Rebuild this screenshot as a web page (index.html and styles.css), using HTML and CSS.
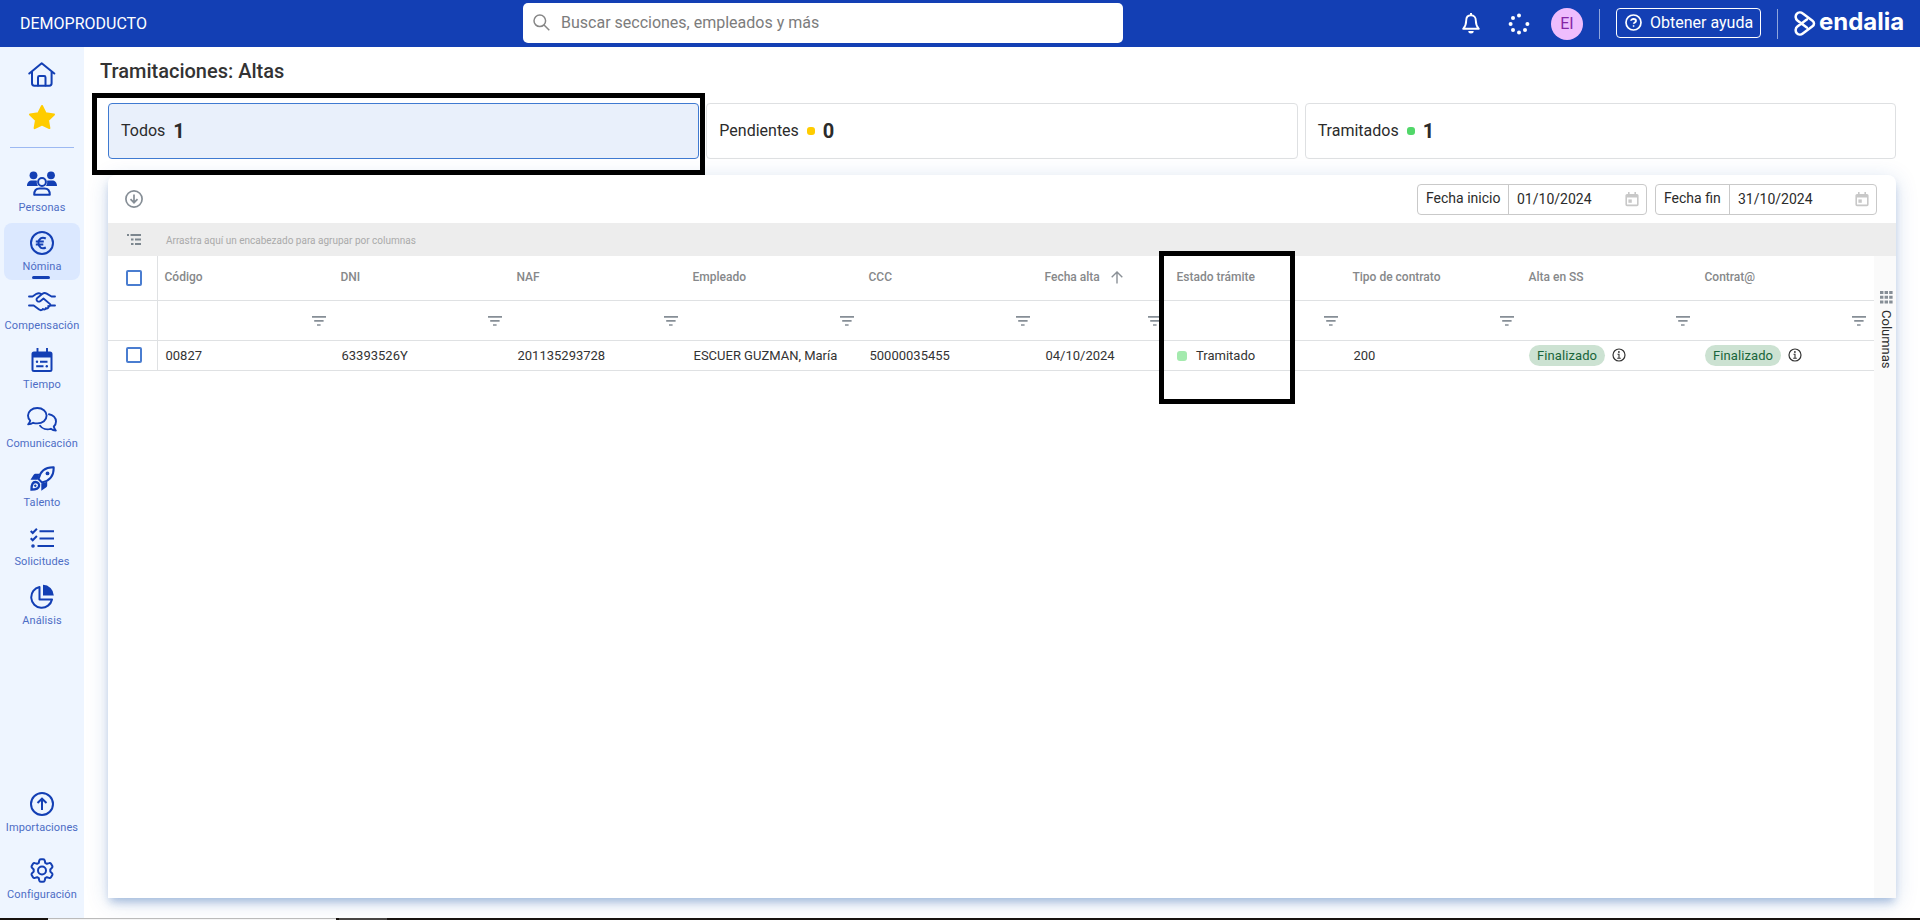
FILE: index.html
```html
<!DOCTYPE html>
<html lang="es">
<head>
    <meta charset="UTF-8">
    <meta name="viewport" content="width=device-width, initial-scale=1.0">
    <title>Tramitaciones: Altas</title>
    <link rel="stylesheet" href="styles.css">
</head>
<body>
    <!-- Shared icons -->
    <svg class="sprite">
        <symbol id="filter" viewBox="0 0 14 10"><path d="M0 .8h14M2.2 4.9h9.4M5 9h3.6" stroke="#868e96" stroke-width="1.7"/></symbol>
        <symbol id="info" viewBox="0 0 14 14"><circle cx="7" cy="7" r="6" fill="none" stroke="#333" stroke-width="1.2"/><path d="M5.5 6.2H7v4M5.2 10.2h3.6" fill="none" stroke="#333" stroke-width="1.1"/><circle cx="6.9" cy="4" r=".9" fill="#333"/></symbol>
        <symbol id="calendar" viewBox="0 0 14 15"><path d="M2 2h10a1.6 1.6 0 0 1 1.6 1.6v9A1.6 1.6 0 0 1 12 14.2H2a1.6 1.6 0 0 1-1.6-1.6v-9A1.6 1.6 0 0 1 2 2zM2 5.4v7.2h10V5.4z" fill="#c8c8c8" fill-rule="evenodd"/><path d="M3.8 0v3M10.2 0v3" stroke="#c8c8c8" stroke-width="1.6"/><path d="M3.4 7.4h3.4v3.4H3.4z" fill="#c8c8c8"/></symbol>
    </svg>

    <header class="topbar">
        <div class="company">DEMOPRODUCTO</div>
        <div class="search">
            <svg width="17" height="17" viewBox="0 0 17 17" fill="none" stroke="#868686" stroke-width="1.5"><circle cx="6.8" cy="6.8" r="5.8"/><path d="M11 11l5.3 5.3"/></svg>
            <span>Buscar secciones, empleados y más</span>
        </div>
        <div class="actions">
            <svg class="bell" width="18" height="21" viewBox="0 0 18 21"><path d="M9 2.2c-3.2 0-4.8 2.4-4.8 5.2 0 3.8-1 6.2-3 8.4h15.6c-2-2.2-3-4.6-3-8.4C13.8 4.6 12.2 2.2 9 2.2z" fill="none" stroke="#fff" stroke-width="1.9" stroke-linejoin="round"/><path d="M9 0v2.5" stroke="#fff" stroke-width="2"/><path d="M6.3 18h5.4a2.7 2.5 0 0 1-5.4 0z" fill="#fff"/></svg>
            <svg class="spinner" width="22" height="22" viewBox="0 0 22 22" fill="#fff"><circle cx="11" cy="2.6" r="2"/><circle cx="5" cy="5" r="2"/><circle cx="2.6" cy="11" r="2"/><circle cx="5" cy="17" r="2"/><circle cx="11" cy="19.4" r="2"/><circle cx="17" cy="17" r="2"/><circle cx="19.4" cy="11" r="2"/></svg>
            <div class="avatar">EI</div>
            <div class="divider"></div>
            <div class="help">
                <svg width="17" height="17" viewBox="0 0 17 17" fill="none" stroke="#fff"><circle cx="8.5" cy="8.5" r="7.5" stroke-width="1.7"/><path d="M6 6.8C6 4.4 11 4.4 11 6.9c0 1.5-2.3 1.5-2.3 2.9" stroke-width="1.8"/><circle cx="8.6" cy="12" r=".6"/></svg>
                <span>Obtener ayuda</span>
            </div>
            <div class="divider"></div>
            <div class="logo">
                <svg width="22" height="25" viewBox="0 0 22 25" fill="none" stroke="#fff" stroke-width="2.5" stroke-linecap="round" stroke-linejoin="round"><path d="M12.8 8.6L3.4 15.6c-2.2 1.7-2.2 4.8-.7 6.5 1.6 1.8 4.2 2 6.1.5l9.7-7.3c2-1.5 2-4.1 0-5.6L8.8 2.4C6.900.9 4.300 1.100 2.700 2.900 1.200 4.600 1.200 7.700 3.400 9.400l9.400 7"/></svg>
                <span>endalia</span>
            </div>
        </div>
    </header>

    <div class="layout">
        <aside class="sidebar">
            <div class="item home">
                <svg width="28" height="25" viewBox="0 0 28 25" fill="none" stroke="#133fb4" stroke-width="2" stroke-linecap="round" stroke-linejoin="round"><path d="M1.300 11.500L13.700 1.200l12.600 10.300M4 9.500v11.800c0 1.500.8 2.400 2.300 2.400h15c1.500 0 2.300-.9 2.300-2.400V9.500"/><path d="M10 23.500v-8c0-.9.4-1.400 1.300-1.400h4.900c.9 0 1.300.5 1.300 1.400v8"/></svg>
            </div>
            <div class="item star">
                <svg width="28" height="26" viewBox="0 0 28 26"><path d="M14 2l3.600 7.300 8.400 1.200-6 5.800 1.400 7.800L14 20.500l-7.400 3.600L8 16.300l-6-5.800 8.400-1.200z" fill="#ffcc00" stroke="#ffcc00" stroke-width="2" stroke-linejoin="round"/></svg>
            </div>
            <div class="separator"></div>
            <div class="item">
                <svg width="30" height="25" viewBox="0 0 30 25" fill="#133fb4"><circle cx="6.5" cy="4.3" r="3.9"/><circle cx="24" cy="4.3" r="3.9"/><path d="M0 15c0-3.600 2-5.600 5-5.600h3c.8 0 1.400.2 2 .4-.5 2-.1 3.800 1 5.200zM30 15c0-3.600-2-5.600-5-5.600h-3c-.8 0-1.400.2-2 .4.500 2 .1 3.800-1 5.200z"/><circle cx="15" cy="11" r="3.9" fill="none" stroke="#133fb4" stroke-width="2"/><path d="M7.200 23.800c0-4 2.200-6.200 5.400-6.200h4.800c3.200 0 5.400 2.200 5.400 6.200z" fill="none" stroke="#133fb4" stroke-width="2" stroke-linejoin="round"/></svg>
                <span>Personas</span>
            </div>
            <div class="item active">
                <svg width="24" height="24" viewBox="0 0 24 24" fill="none" stroke="#133fb4" stroke-width="2"><circle cx="12" cy="12" r="11"/><path d="M15.800 7.500c-4-2-7.300.2-7.300 4.500s3.300 6.500 7.300 4.500M5.800 10.500h8M5.800 13.500h7.500"/></svg>
                <span>Nómina</span>
            </div>
            <div class="item short">
                <svg width="28" height="20" viewBox="0 0 28 20" fill="none" stroke="#133fb4" stroke-width="1.9" stroke-linecap="round" stroke-linejoin="round"><path d="M1 4.500h3.500l4-2.700c1.500-.8 3-.8 4.300 0M27 4.500h-3.500l-4.800-2.900c-1.500-.8-3-.7-4.200.2L9.300 6.100c-1.200 1-.9 2.700.4 3.300 1 .4 2 .1 2.800-.5l3-2.400 6.300 5.400c1.300 1.200-.1 3.100-1.600 2.100.9 1.500-.8 3.100-2.300 2-.2 1.500-1.800 1.900-3 .9-.7 1.400-2.300 1.800-3.800.7L5.700 13.500H1M27 13.500h-4.600"/></svg>
                <span>Compensación</span>
            </div>
            <div class="item">
                <svg width="22" height="25" viewBox="0 0 22 25" fill="#133fb4"><path d="M3 3.500h16a2.500 2.500 0 0 1 2.500 2.500v15.500A2.500 2.500 0 0 1 19 24H3a2.500 2.500 0 0 1-2.500-2.500V6A2.500 2.500 0 0 1 3 3.500zM2.500 9.500v12.500h17V9.500z" fill-rule="evenodd"/><path d="M6.500 0v5M16 0v5M9 13.700h7.500M5.200 18.300h7.300" stroke="#133fb4" stroke-width="1.9"/><circle cx="6" cy="13.700" r="1.200"/><circle cx="15.800" cy="18.300" r="1.200"/></svg>
                <span>Tiempo</span>
            </div>
            <div class="item">
                <svg width="30" height="25" viewBox="0 0 30 25" fill="none" stroke="#133fb4" stroke-width="1.9" stroke-linecap="round" stroke-linejoin="round"><path d="M10.300 1C5 1 1 4.200 1 8.600c0 2 .8 3.700 2.200 5.100-.2 1.400-1 2.600-2 3.700 2 0 3.700-.6 5-1.600 1.300.4 2.700.6 4.100.6 5.300 0 9.300-3.400 9.300-7.800S15.600 1 10.300 1z"/><path d="M22 7.300c4 .5 7 3.500 7 7.200 0 2-.8 3.700-2.200 5 .2 1.500 1 2.800 2 4-2 0-3.700-.7-5-1.700-4.200 1.200-8.600-.1-10.700-3"/></svg>
                <span>Comunicación</span>
            </div>
            <div class="item">
                <svg width="25" height="25" viewBox="0 0 25 25" fill="#133fb4"><path d="M8.500 13C10 5.500 15 1 23.700 1.200 24 10 19.500 15 12 16.500z" fill="none" stroke="#133fb4" stroke-width="2" stroke-linejoin="round"/><circle cx="17.500" cy="7.400" r="1.9"/><path d="M9.300 7.800L7.600 13.700H.5l3-4.700c.6-.9 1.300-1.200 2.200-1.200zM11.300 17.400l5.900-1.700v3.600c0 .9-.3 1.600-1.200 2.200L11.300 24.700z"/><path d="M1.500 23.500c0-5 1.200-7.500 3.800-7.500s4.300 1.700 3.700 4.200c-.5 2.400-3.200 3.300-7.500 3.300zM4.500 20.500l1.500-1.500" fill="none" stroke="#133fb4" stroke-width="2.3"/></svg>
                <span>Talento</span>
            </div>
            <div class="item short">
                <svg width="25" height="20" viewBox="0 0 25 20" fill="none" stroke="#133fb4" stroke-width="2"><path d="M9.500 3.200H24M9.500 10.500H24M7.500 18H24M.7 3l2 2L6.900.7M.7 10.300l2 2L6.900 8"/><circle cx="3" cy="18" r=".8"/></svg>
                <span>Solicitudes</span>
            </div>
            <div class="item">
                <svg width="24" height="25" viewBox="0 0 24 25"><path d="M9.500 3A10.500 10.500 0 1 0 22 15.500H9.500z" fill="none" stroke="#133fb4" stroke-width="2" stroke-linejoin="round"/><path d="M13 .8A11 11 0 0 1 23.800 11.500H13z" fill="#133fb4"/></svg>
                <span>Análisis</span>
            </div>
            <div class="item first-bottom">
                <svg width="24" height="24" viewBox="0 0 24 24" fill="none" stroke="#133fb4" stroke-width="2"><circle cx="12" cy="12" r="11"/><path d="M12 18V7M7.500 11L12 6.700l4.500 4.300"/></svg>
                <span>Importaciones</span>
            </div>
            <div class="item config">
                <svg width="24" height="25" viewBox="0 0 24 25" fill="none" stroke="#133fb4" stroke-width="2" stroke-linejoin="round"><path d="M9.200 2.700Q9.500 1.300 10.800 1.300h2.400q1.300 0 1.600 1.400l.4 2.100 1.700 1 2.100-.7q1.300-.5 2 .7l1.200 2q.6 1.200-.4 2.100l-1.500 1.600v2l1.500 1.600q1 .9.4 2.100l-1.200 2q-.7 1.200-2 .7l-2.100-.7-1.700 1-.4 2.100q-.3 1.400-1.600 1.400h-2.400q-1.300 0-1.600-1.400l-.4-2.100-1.700-1-2.100.7q-1.300.5-2-.7l-1.200-2q-.6-1.200.4-2.100l1.500-1.600v-2L2.200 9.900q-1-.9-.4-2.100l1.200-2q.7-1.200 2-.7l2.100.7 1.700-1z"/><circle cx="12" cy="12.500" r="4"/></svg>
                <span>Configuración</span>
            </div>
        </aside>

        <main class="content">
            <h1>Tramitaciones: Altas</h1>

            <div class="cards">
                <div class="card selected">Todos <b>1</b></div>
                <div class="card">Pendientes <i class="dot yellow"></i><b>0</b></div>
                <div class="card">Tramitados <i class="dot green"></i><b>1</b></div>
                <div class="mark mark-card"></div>
            </div>

            <section class="panel">
                <div class="toolbar">
                    <svg width="18" height="18" viewBox="0 0 18 18" fill="none" stroke="#868e96" stroke-width="1.7"><circle cx="9" cy="9" r="8.100"/><path d="M9 4.500v8M5.500 9.200L9 12.700l3.500-3.500"/></svg>
                    <div class="dates">
                        <div class="date start"><label>Fecha inicio</label><div class="value">01/10/2024<svg width="14" height="15"><use href="#calendar"/></svg></div></div>
                        <div class="date end"><label>Fecha fin</label><div class="value">31/10/2024<svg width="14" height="15"><use href="#calendar"/></svg></div></div>
                    </div>
                </div>
                <div class="groupbar">
                    <svg width="14" height="11" viewBox="0 0 14 11" stroke="#7d878f" stroke-width="2"><path d="M0 1h2M3.500 1H14M4 5.500h2.500M8 5.500h6M4 10h2.500M8 10h6"/></svg>
                    <span>Arrastra aquí un encabezado para agrupar por columnas</span>
                </div>
                <div class="table-wrap">
                    <div class="table">
                        <div class="row head">
                            <div class="check"><i class="box"></i></div>
                            <div>Código</div>
                            <div>DNI</div>
                            <div>NAF</div>
                            <div>Empleado</div>
                            <div>CCC</div>
                            <div>Fecha alta <svg class="sort" width="12" height="13" viewBox="0 0 12 13" fill="none" stroke="#8a9096" stroke-width="1.4"><path d="M6 12.500V1.200M.7 6.300L6 1l5.300 5.300"/></svg></div>
                            <div>Estado trámite</div>
                            <div>Tipo de contrato</div>
                            <div>Alta en SS</div>
                            <div>Contrat@</div>
                        </div>
                        <div class="row filters">
                            <div class="check"></div>
                            <div><svg width="14" height="10"><use href="#filter"/></svg></div>
                            <div><svg width="14" height="10"><use href="#filter"/></svg></div>
                            <div><svg width="14" height="10"><use href="#filter"/></svg></div>
                            <div><svg width="14" height="10"><use href="#filter"/></svg></div>
                            <div><svg width="14" height="10"><use href="#filter"/></svg></div>
                            <div><svg width="14" height="10"><use href="#filter"/></svg></div>
                            <div><svg width="14" height="10"><use href="#filter"/></svg></div>
                            <div><svg width="14" height="10"><use href="#filter"/></svg></div>
                            <div><svg width="14" height="10"><use href="#filter"/></svg></div>
                            <div><svg width="14" height="10"><use href="#filter"/></svg></div>
                        </div>
                        <div class="row data">
                            <div class="check"><i class="box"></i></div>
                            <div>00827</div>
                            <div>63393526Y</div>
                            <div>201135293728</div>
                            <div>ESCUER GUZMAN, María</div>
                            <div>50000035455</div>
                            <div>04/10/2024</div>
                            <div><i class="status"></i>Tramitado</div>
                            <div>200</div>
                            <div class="tagcell"><span class="tag">Finalizado</span><svg width="14" height="14"><use href="#info"/></svg></div>
                            <div class="tagcell"><span class="tag">Finalizado</span><svg width="14" height="14"><use href="#info"/></svg></div>
                        </div>
                    </div>
                    <div class="columns-tab">
                        <svg width="13" height="13" viewBox="0 0 13 13" stroke="#868e96" stroke-width="3" stroke-dasharray="3.400 1.200"><path d="M0 1.500h13M0 6.300h13M0 11h13"/></svg>
                        <span>Columnas</span>
                    </div>
                    <div class="mark mark-status"></div>
                </div>
            </section>
        </main>
    </div>

    <div class="taskbar"><div class="window"></div><div class="window-dark"></div></div>
</body>
</html>
```

FILE: styles.css
```css
* { box-sizing: border-box; }
body {
    margin: 0;
    height: 920px;
    overflow: hidden;
    display: flex;
    flex-direction: column;
    font-family: Roboto, "Liberation Sans", sans-serif;
    color: #2b2b2b;
    background: #fff;
}
svg { display: block; flex: none; }
.sprite { position: absolute; width: 0; height: 0; }

/* Top bar */
.topbar {
    height: 47px;
    flex: none;
    background: #133fb4;
    color: #fff;
    display: flex;
    align-items: center;
}
.company {
    width: 523px;
    padding-left: 20px;
    font-size: 16px;
}
.search {
    width: 600px;
    height: 40px;
    margin-bottom: 1px;
    background: #fff;
    border-radius: 5px;
    display: flex;
    align-items: center;
    gap: 11px;
    padding: 0 10px 2px;
    color: #7c7c7c;
    font-size: 16px;
}
.actions {
    margin-left: auto;
    padding-right: 15px;
    display: flex;
    align-items: center;
}
.spinner { margin: 0 21px 0 28px; }
.avatar {
    width: 32px;
    height: 32px;
    margin-top: 1px;
    border-radius: 50%;
    background: #efbdfd;
    color: #8626a6;
    text-align: center;
    line-height: 31px;
    font-size: 16px;
}
.divider {
    width: 1px;
    height: 30px;
    margin: 0 16px;
    background: #8fa6dd;
}
.help {
    width: 145px;
    height: 30px;
    border: 1px solid #fff;
    border-radius: 4px;
    display: flex;
    align-items: center;
    gap: 8px;
    padding: 0 0 1px 8px;
    margin-bottom: 1px;
    font-size: 16px;
    white-space: nowrap;
}
.logo {
    width: 111px;
    display: flex;
    align-items: center;
    gap: 3px;
    font: 700 24px/25px Inter, sans-serif;
}
.logo span { margin-top: -4px; }

/* Side menu */
.layout { flex: 1; display: flex; min-height: 0; }
.sidebar {
    width: 84px;
    flex: none;
    background: #eef5ff;
    display: flex;
    flex-direction: column;
    align-items: center;
}
.item {
    width: 76px;
    height: 57px;
    flex: none;
    margin-bottom: 2px;
    display: flex;
    flex-direction: column;
    align-items: center;
    justify-content: flex-end;
    gap: 4px;
    padding-bottom: 6px;
    font-size: 11px;
    line-height: 15px;
    letter-spacing: 0.1px;
    color: #4d6dc5;
    white-space: nowrap;
}
.item.home { height: 40px; padding: 0; margin: 0; }
.item.star { height: 43px; padding: 0; margin: 0; }
.item.short svg { margin-bottom: 2px; }
.separator {
    width: 64px;
    height: 1px;
    flex: none;
    margin: 17px 0 16px;
    background: #9db9f2;
}
.item.active {
    background: #dbe8ff;
    border-radius: 8px;
    position: relative;
}
.item.active::after {
    content: "";
    position: absolute;
    bottom: 1px;
    left: 28px;
    width: 18px;
    height: 3px;
    border-radius: 2px;
    background: #133fb4;
}
.item.first-bottom { margin-top: auto; margin-bottom: 10px; }
.item.config { margin-bottom: 10px; }

/* Content */
.content {
    flex: 1;
    padding: 0 24px 20px;
    display: flex;
    flex-direction: column;
    min-width: 0;
}
h1 {
    margin: 12px 0 19px -8px;
    font-size: 20px;
    line-height: 25px;
    font-weight: 500;
    color: #333;
}
.cards {
    display: grid;
    grid-template-columns: repeat(3, 1fr);
    gap: 7px;
    position: relative;
    margin-bottom: 16px;
}
.card {
    height: 56px;
    border: 1px solid #dee0e2;
    border-radius: 4px;
    display: flex;
    align-items: center;
    padding: 0 12px 2px;
    font-size: 16px;
}
.card.selected { background: #e9f0fb; border-color: #3f7ad1; }
.card b { font-size: 20px; font-weight: 700; margin: 2px 0 0 8px; }
.dot { width: 8px; height: 8px; border-radius: 3px; margin: 2px 0 0 8px; }
.dot.yellow { background: #ffcc00; }
.dot.green { background: #51d769; }

/* Highlight frames, drawn over the page */
.mark { position: absolute; border: 5px solid #000; z-index: 2; }
.mark-card { left: -16px; top: -10px; width: 613px; height: 82px; }
.mark-status { left: 1051px; top: -5px; width: 136px; height: 153px; }

.panel {
    flex: 1;
    background: #fff;
    border-radius: 8px 8px 0 0;
    box-shadow: 0 6px 8px -2px rgba(19, 80, 165, 0.3), 0 4px 22px rgba(19, 80, 165, 0.17);
    display: flex;
    flex-direction: column;
}
.toolbar {
    height: 48px;
    display: flex;
    align-items: center;
    justify-content: space-between;
    padding: 0 19px 0 17px;
}
.dates { display: flex; gap: 8px; }
.date {
    height: 31px;
    border: 1px solid #c9c9c9;
    border-radius: 4px;
    display: flex;
    font-size: 14px;
    line-height: 27px;
}
.date.start { width: 230px; }
.date.end { width: 222px; }
.date label { padding-left: 8px; border-right: 1px solid #c9c9c9; white-space: nowrap; }
.start label { width: 91px; }
.end label { width: 74px; }
.value {
    flex: 1;
    padding: 0 7px 0 8px;
    display: flex;
    align-items: center;
    justify-content: space-between;
}
.groupbar {
    height: 33px;
    background: #ededed;
    display: flex;
    align-items: center;
    padding-left: 19px;
    gap: 25px;
    font-size: 10px;
    color: #aaa;
}
.groupbar span { margin-top: 2px; }

/* Table */
.table-wrap { flex: 1; display: flex; position: relative; }
.table { width: 1766px; }
.row {
    display: grid;
    grid-template-columns: 50px repeat(5, 176px) 132px repeat(4, 176px);
    border-bottom: 1px solid #dfe1e3;
}
.row > div { display: flex; align-items: center; padding-left: 6.5px; white-space: nowrap; }
.row > .check { border-right: 1px solid #dfe1e3; padding-left: 18px; }
.box { width: 16px; height: 16px; border: 2px solid #4a7dd0; border-radius: 2px; }
.head { height: 45px; font-size: 12px; font-weight: 500; color: #86888a; }
.head > div { padding-bottom: 3px; }
.head > .check { padding-bottom: 1px; }
.sort { margin: 2px 0 0 11px; }
.filters { height: 40px; }
.row.filters > div { justify-content: flex-end; padding-right: 8px; }
.data { height: 30px; font-size: 13px; color: #333; }
.row.data > div { padding: 0 0 1px 7.5px; }
.row.data > .check { padding-left: 18px; }
.status { width: 10px; height: 10px; margin: 1px 9px 0 -0.5px; border-radius: 3px; background: #a4eaae; }
.row.data > .tagcell { padding-left: 7px; }
.tag {
    width: 76px;
    height: 21px;
    margin-right: 7px;
    border-radius: 11px;
    background: #cce2d2;
    color: #19653a;
    text-align: center;
    line-height: 21px;
    letter-spacing: 0.1px;
}
.columns-tab {
    width: 22px;
    background: #fafafa;
    padding: 35px 0 0 2px;
    display: flex;
    flex-direction: column;
    align-items: center;
    gap: 6px;
    font-size: 13px;
}
.columns-tab span { writing-mode: vertical-rl; }

/* Strip along the bottom edge */
.taskbar {
    height: 2px;
    flex: none;
    background: #17120f;
    display: flex;
    gap: 3px;
    padding-left: 48px;
}
.window { width: 288px; background: #f5f5f5; border-top: 1px solid #bbb; }
.window-dark { width: 48px; background: #484644; }
```
